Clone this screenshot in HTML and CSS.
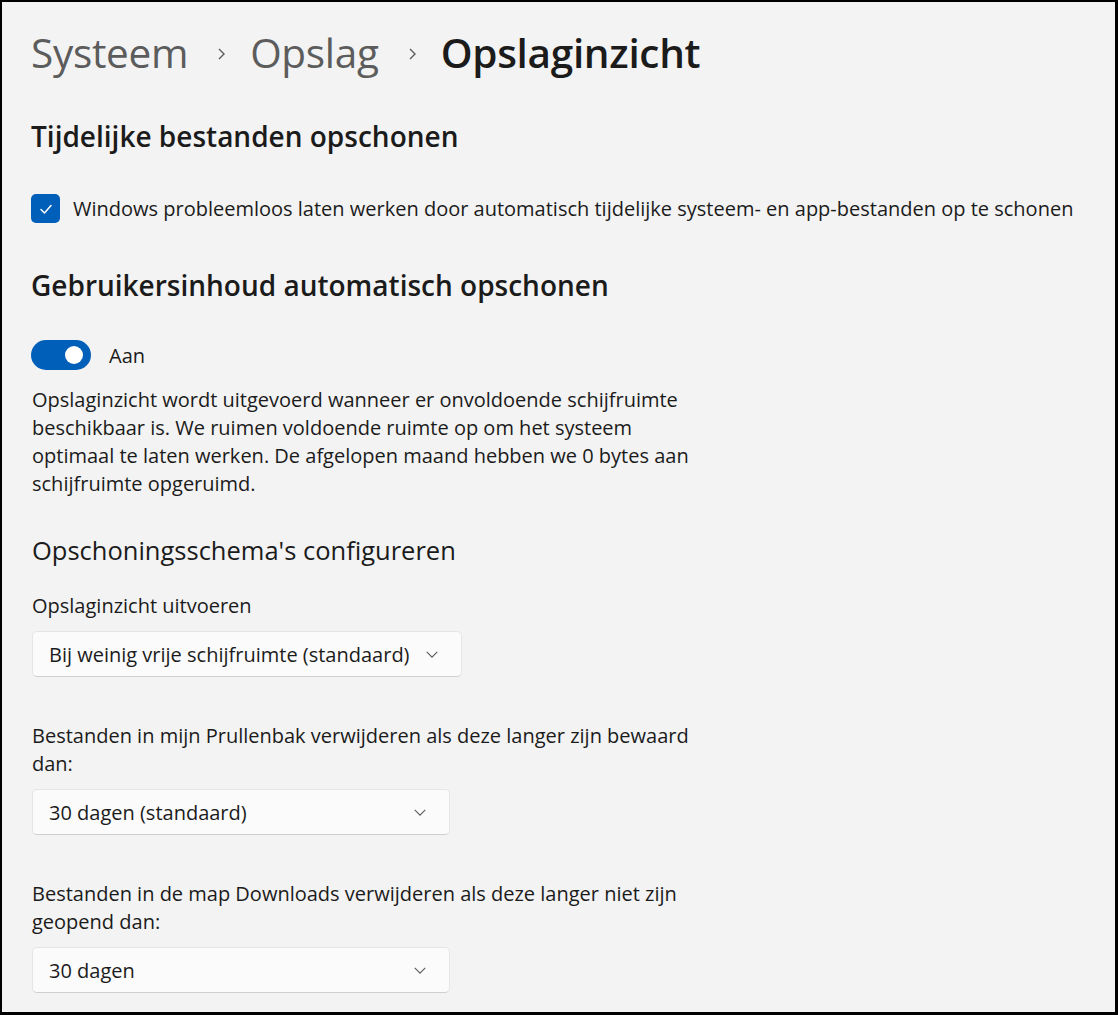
FILE: index.html
```html
<!DOCTYPE html>
<html lang="nl">
<head>
<meta charset="utf-8">
<title>Opslaginzicht</title>
<link rel="stylesheet" href="styles.css">
</head>
<body>
<div class="frame">
  <nav class="crumbs">
    <span class="crumb">Systeem</span>
    <svg class="sep" viewBox="0 0 10 16" width="10" height="16"><path d="M3 3 L8 8 L3 13" fill="none" stroke="#5c5c5c" stroke-width="1.4"/></svg>
    <span class="crumb">Opslag</span>
    <svg class="sep" viewBox="0 0 10 16" width="10" height="16"><path d="M3 3 L8 8 L3 13" fill="none" stroke="#5c5c5c" stroke-width="1.4"/></svg>
    <span class="crumb current">Opslaginzicht</span>
  </nav>

  <h2 class="section-title first">Tijdelijke bestanden opschonen</h2>
  <label class="check-row">
    <span class="checkbox"><svg viewBox="0 0 16 16" width="16" height="16"><path d="M3 8.5 L6.5 12 L13 4.5" fill="none" stroke="#fff" stroke-width="1.5" stroke-linecap="round" stroke-linejoin="round"/></svg></span>
    <span>Windows probleemloos laten werken door automatisch tijdelijke systeem- en app-bestanden op te schonen</span>
  </label>

  <h2 class="section-title second">Gebruikersinhoud automatisch opschonen</h2>
  <div class="toggle-row">
    <span class="toggle"><span class="knob"></span></span>
    <span>Aan</span>
  </div>
  <p class="desc">Opslaginzicht wordt uitgevoerd wanneer er onvoldoende schijfruimte beschikbaar is. We ruimen voldoende ruimte op om het systeem optimaal te laten werken. De afgelopen maand hebben we 0 bytes aan schijfruimte opgeruimd.</p>

  <h3 class="sub-title">Opschoningsschema's configureren</h3>

  <div class="field">
    <div class="field-label">Opslaginzicht uitvoeren</div>
    <div class="select wide"><span>Bij weinig vrije schijfruimte (standaard)</span><svg class="chev" viewBox="0 0 16 10" width="14" height="9"><path d="M2 2 L8 8 L14 2" fill="none" stroke="#5c5c5c" stroke-width="1.3"/></svg></div>
  </div>

  <div class="field">
    <div class="field-label">Bestanden in mijn Prullenbak verwijderen als deze langer zijn bewaard dan:</div>
    <div class="select"><span>30 dagen (standaard)</span><svg class="chev" viewBox="0 0 16 10" width="14" height="9"><path d="M2 2 L8 8 L14 2" fill="none" stroke="#5c5c5c" stroke-width="1.3"/></svg></div>
  </div>

  <div class="field">
    <div class="field-label">Bestanden in de map Downloads verwijderen als deze langer niet zijn geopend dan:</div>
    <div class="select"><span>30 dagen</span><svg class="chev" viewBox="0 0 16 10" width="14" height="9"><path d="M2 2 L8 8 L14 2" fill="none" stroke="#5c5c5c" stroke-width="1.3"/></svg></div>
  </div>
</div>
</body>
</html>
```
FILE: styles.css
```css
html, body {
  margin: 0;
  padding: 0;
  background: #000;
}
.frame {
  box-sizing: border-box;
  width: 1118px;
  height: 1015px;
  border: 2px solid #000;
  border-right-width: 3px;
  border-bottom-width: 3px;
  background: #f3f3f3;
  overflow: hidden;
  padding: 0 0 0 29px;
  font-family: "Open Sans", "Noto Sans", sans-serif;
  color: #1b1b1b;
  font-size: 20px;
}
.crumbs {
  display: flex;
  align-items: center;
  height: 100px;
  margin-top: 0;
}
.crumb {
  font-size: 40.5px;
  font-weight: 500;
  color: #5c5c5c;
  letter-spacing: -0.3px;
}
.crumb.current {
  color: #1b1b1b;
  font-weight: 600;
}
.sep {
  margin: 4px 24px 0 28px;
}
.section-title {
  font-size: 28px;
  font-weight: 600;
  margin: 0;
  line-height: 36px;
}
.section-title.first {
  margin-top: 16px;
}
.check-row {
  display: flex;
  align-items: center;
  gap: 13px;
  margin-top: 40px;
  line-height: 28px;
}
.checkbox {
  width: 29px;
  height: 29px;
  border-radius: 5px;
  background: #005fb8;
  display: flex;
  align-items: center;
  justify-content: center;
}
.section-title.second {
  margin-top: 44px;
}
.toggle-row {
  display: flex;
  align-items: center;
  gap: 18px;
  margin-top: 37px;
}
.toggle {
  width: 60px;
  height: 30px;
  border-radius: 15px;
  background: #005fb8;
  position: relative;
}
.knob {
  position: absolute;
  right: 8px;
  top: 6px;
  width: 18px;
  height: 18px;
  border-radius: 50%;
  background: #fff;
}
.desc {
  width: 680px;
  margin: 16px 0 0 1px;
  line-height: 28px;
}
.sub-title {
  font-size: 25.5px;
  font-weight: 400;
  margin: 35px 0 0 1px;
  line-height: 34px;
}
.field {
  margin-left: 1px;
}
.field-label {
  width: 680px;
  line-height: 28px;
  margin-top: 25px;
}
.field + .field .field-label {
  margin-top: 45px;
}
.select {
  box-sizing: border-box;
  width: 418px;
  height: 46px;
  margin-top: 11px;
  background: #fbfbfb;
  border: 1px solid #e5e5e5;
  border-bottom-color: #cfcfcf;
  border-radius: 5px;
  display: flex;
  align-items: center;
  justify-content: space-between;
  padding: 0 22px 0 16px;
}
.select.wide {
  width: 430px;
}
```
